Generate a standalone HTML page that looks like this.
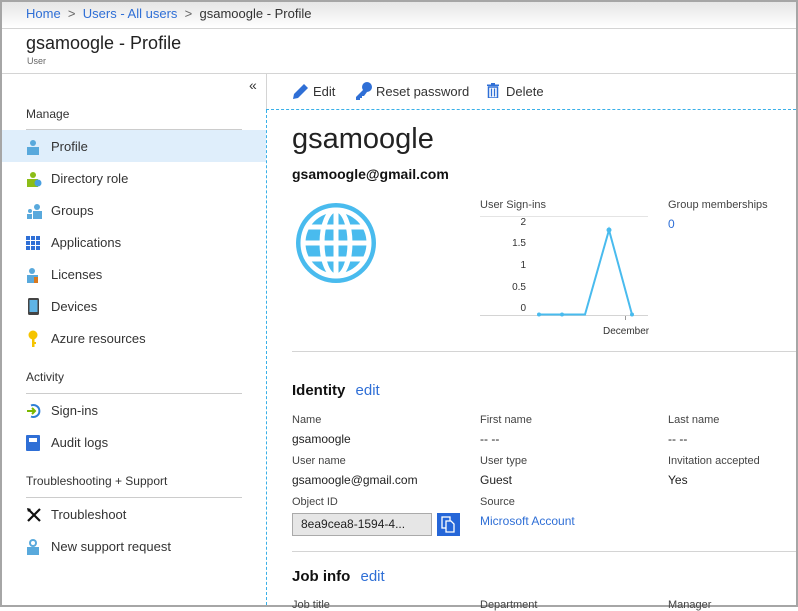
<!DOCTYPE html>
<html><head><meta charset="utf-8"><style>
*{margin:0;padding:0;box-sizing:border-box}
body{width:798px;height:607px;overflow:hidden;font-family:"Segoe UI","Liberation Sans",sans-serif;color:#222;background:#fff;position:relative;font-size:13px}
.a{position:absolute;white-space:nowrap}
.lab{font-size:11px;color:#444}
.val{font-size:12px;color:#222}
.lnk,.val.lnk{color:#2f6fd6}
.nav{font-size:13px;color:#333;left:51px}
.ic{position:absolute;left:26px}
</style></head><body>
<div class="a" style="left:0;top:0;width:798px;height:2px;background:#a6a6a6"></div>
<div class="a" style="left:0;top:0;width:2px;height:607px;background:#a6a6a6"></div>
<div class="a" style="right:0;top:0;width:2px;height:607px;background:#a6a6a6"></div>
<div class="a" style="left:0;bottom:0;width:798px;height:2px;background:#a6a6a6"></div>
<div class="a" style="left:2px;top:2px;width:794px;height:26px;background:linear-gradient(#e6e6e6,#fff)"></div>
<div class="a" style="left:2px;top:28px;width:794px;height:1px;background:#d4d4d4"></div>
<div class="a" style="left:26px;top:6px;font-size:13px"><span class="lnk">Home</span> <span style="color:#666">&nbsp;&gt;&nbsp;</span> <span class="lnk">Users - All users</span> <span style="color:#666">&nbsp;&gt;&nbsp;</span> <span style="color:#333">gsamoogle - Profile</span></div>
<div class="a" style="left:26px;top:33px;font-size:18px;color:#222">gsamoogle - Profile</div>
<div class="a" style="left:27px;top:56px;font-size:9px;color:#666">User</div>
<div class="a" style="left:2px;top:73px;width:794px;height:1px;background:#d4d4d4"></div>
<div class="a" style="left:266px;top:74px;width:1px;height:36px;background:#d4d4d4"></div>
<div class="a" style="left:266px;top:109px;width:530px;border-top:1px dashed #3ab0e8"></div>
<div class="a" style="left:266px;top:110px;height:495px;border-left:1px dashed #3ab0e8"></div>
<div class="a" style="left:249px;top:77px;font-size:14px;color:#333">«</div>
<div class="a" style="left:26px;top:107px;font-size:12px;color:#333">Manage</div>
<div class="a" style="left:26px;top:129px;width:216px;height:1px;background:#ccc"></div>
<div class="a" style="left:2px;top:130px;width:264px;height:32px;background:#dfeefb"></div>
<div class="a nav" style="top:139px">Profile</div>
<div class="a nav" style="top:171px">Directory role</div>
<div class="a nav" style="top:203px">Groups</div>
<div class="a nav" style="top:235px">Applications</div>
<div class="a nav" style="top:267px">Licenses</div>
<div class="a nav" style="top:299px">Devices</div>
<div class="a nav" style="top:331px">Azure resources</div>
<svg class="ic" style="top:139px" width="14" height="16"><circle cx="7" cy="4" r="3" fill="#59a9dc"/><rect x="1" y="8" width="12" height="8" fill="#59a9dc"/></svg>
<svg class="ic" style="top:171px" width="16" height="16"><circle cx="7" cy="4" r="3" fill="#8cbd18"/><rect x="1" y="8" width="11" height="8" fill="#8cbd18"/><circle cx="12" cy="12" r="3.5" fill="#4aa0e0"/></svg>
<svg class="ic" style="top:203px" width="16" height="16"><circle cx="11" cy="4" r="3" fill="#59a9dc"/><rect x="7" y="8" width="9" height="8" fill="#59a9dc"/><circle cx="4" cy="8" r="2" fill="#59a9dc"/><rect x="1" y="11" width="5" height="5" fill="#59a9dc"/></svg>
<svg class="ic" style="top:236px" width="14" height="14" fill="#2f6fd6"><rect x="0" y="0" width="4" height="4"/><rect x="5" y="0" width="4" height="4"/><rect x="10" y="0" width="4" height="4"/><rect x="0" y="5" width="4" height="4"/><rect x="5" y="5" width="4" height="4"/><rect x="10" y="5" width="4" height="4"/><rect x="0" y="10" width="4" height="4"/><rect x="5" y="10" width="4" height="4"/><rect x="10" y="10" width="4" height="4"/></svg>
<svg class="ic" style="top:267px" width="14" height="16"><circle cx="6" cy="4" r="3" fill="#59a9dc"/><rect x="1" y="8" width="11" height="8" fill="#59a9dc"/><rect x="8" y="10" width="4" height="6" fill="#d9781e"/></svg>
<svg class="ic" style="top:298px;left:28px" width="11" height="17"><rect x="0" y="0" width="11" height="17" rx="1.5" fill="#444"/><rect x="1.5" y="2" width="8" height="12" fill="#5fb4e6"/></svg>
<svg class="ic" style="top:330px;left:28px" width="10" height="17"><circle cx="5" cy="5" r="4.5" fill="#f5c400"/><rect x="4" y="8" width="2.5" height="9" fill="#f5c400"/><rect x="6" y="12" width="2" height="2" fill="#f5c400"/></svg>
<div class="a" style="left:26px;top:370px;font-size:12px;color:#333">Activity</div>
<div class="a" style="left:26px;top:393px;width:216px;height:1px;background:#ccc"></div>
<div class="a nav" style="top:403px">Sign-ins</div>
<div class="a nav" style="top:435px">Audit logs</div>
<svg class="ic" style="top:403px" width="16" height="16"><path d="M5 2.5A6 6 0 1 1 5 13.5" stroke="#2f7fd6" stroke-width="2" fill="none"/><path d="M1 8h8M6 5l3 3-3 3" stroke="#7ab800" stroke-width="2" fill="none"/></svg>
<svg class="ic" style="top:435px" width="14" height="16"><rect x="0" y="0" width="14" height="16" rx="1" fill="#2f6fd6"/><rect x="3" y="3" width="8" height="4" fill="#fff"/></svg>
<div class="a" style="left:26px;top:474px;font-size:12px;color:#333">Troubleshooting + Support</div>
<div class="a" style="left:26px;top:497px;width:216px;height:1px;background:#ccc"></div>
<div class="a nav" style="top:507px">Troubleshoot</div>
<div class="a nav" style="top:539px">New support request</div>
<svg class="ic" style="top:507px" width="16" height="16"><path d="M2 14L14 2M2 2l12 12" stroke="#111" stroke-width="2.2"/><path d="M1 1l4 1-3 3z" fill="#111"/></svg>
<svg class="ic" style="top:538px" width="14" height="17"><circle cx="7" cy="5" r="4" fill="#59a9dc"/><rect x="1" y="9" width="12" height="8" fill="#59a9dc"/><circle cx="7" cy="5" r="2" fill="#fff"/></svg>
<svg class="a" style="left:292px;top:83px" width="17" height="17"><path d="M1 16l1-5L12 1l4 4L6 15z" fill="#2f6fd6"/></svg>
<div class="a" style="left:313px;top:84px;font-size:13px;color:#333">Edit</div>
<svg class="a" style="left:355px;top:82px" width="17" height="18"><circle cx="12" cy="5" r="5" fill="#2f6fd6"/><path d="M9 7L1 15v3h4v-2h2v-2h2l3-4z" fill="#2f6fd6"/></svg>
<div class="a" style="left:376px;top:84px;font-size:13px;color:#333">Reset password</div>
<svg class="a" style="left:487px;top:83px" width="12" height="15"><rect x="0" y="1.5" width="12" height="1.5" fill="#2f6fd6"/><rect x="4" y="0" width="4" height="2" fill="#2f6fd6"/><path d="M1.5 4h9v11h-9z" fill="none" stroke="#2f6fd6" stroke-width="1.5"/><path d="M4.5 5.5v8M7.5 5.5v8" stroke="#2f6fd6" stroke-width="1.3"/></svg>
<div class="a" style="left:506px;top:84px;font-size:13px;color:#333">Delete</div>
<div class="a" style="left:292px;top:123px;font-size:29px;color:#222">gsamoogle</div>
<div class="a" style="left:292px;top:166px;font-size:14px;font-weight:bold;color:#111">gsamoogle@gmail.com</div>
<svg class="a" style="left:293px;top:200px" width="86" height="86" viewBox="0 0 86 86"><circle cx="43" cy="43" r="40" fill="#49bbee"/><circle cx="43" cy="43" r="33" fill="none" stroke="#fff" stroke-width="5"/><ellipse cx="43" cy="43" rx="14" ry="33" fill="none" stroke="#fff" stroke-width="5"/><path d="M43 10v66M10 43h66M14 27h58M14 59h58" stroke="#fff" stroke-width="5"/></svg>
<div class="a" style="left:480px;top:199px;font-size:11px;color:#444">User Sign-ins</div>
<div class="a" style="left:480px;top:216px;width:168px;height:1px;background:#e4e4e4"></div>
<div class="a" style="left:500px;top:218px;width:26px;text-align:right;font-size:10px;color:#333;line-height:10px">2</div>
<div class="a" style="left:500px;top:239px;width:26px;text-align:right;font-size:10px;color:#333;line-height:10px">1.5</div>
<div class="a" style="left:500px;top:261px;width:26px;text-align:right;font-size:10px;color:#333;line-height:10px">1</div>
<div class="a" style="left:500px;top:283px;width:26px;text-align:right;font-size:10px;color:#333;line-height:10px">0.5</div>
<div class="a" style="left:500px;top:304px;width:26px;text-align:right;font-size:10px;color:#333;line-height:10px">0</div>
<div class="a" style="left:480px;top:315px;width:168px;height:1px;background:#d4d4d4"></div>
<div class="a" style="left:625px;top:316px;width:1px;height:4px;background:#999"></div>
<svg class="a" style="left:480px;top:190px" width="170" height="130"><polyline points="59,124.5 82,124.5 105,124.5 129,40 152,124.5" fill="none" stroke="#49bbee" stroke-width="2"/><circle cx="59" cy="124.5" r="2" fill="#49bbee"/><circle cx="82" cy="124.5" r="2" fill="#49bbee"/><circle cx="129" cy="40" r="2.5" fill="#49bbee"/><circle cx="152" cy="124.5" r="2" fill="#49bbee"/></svg>
<div class="a" style="left:603px;top:326px;font-size:10px;color:#333">December</div>
<div class="a" style="left:668px;top:199px;font-size:11px;color:#444">Group memberships</div>
<div class="a lnk" style="left:668px;top:217px;font-size:12px">0</div>
<div class="a" style="left:292px;top:351px;width:504px;height:1px;background:#d4d4d4"></div>
<div class="a" style="left:292px;top:382px;font-size:15px;font-weight:bold;color:#111">Identity <span class="lnk" style="font-weight:normal;margin-left:6px">edit</span></div>
<div class="a lab" style="left:292px;top:414px">Name</div>
<div class="a val" style="left:292px;top:432px">gsamoogle</div>
<div class="a lab" style="left:292px;top:455px">User name</div>
<div class="a val" style="left:292px;top:473px">gsamoogle@gmail.com</div>
<div class="a lab" style="left:292px;top:496px">Object ID</div>
<div class="a" style="left:292px;top:513px;width:140px;height:23px;background:#e6e6e6;border:1px solid #aaa;font-size:12px;padding:3px 0 0 8px;color:#222">8ea9cea8-1594-4...</div>
<div class="a" style="left:437px;top:513px;width:23px;height:23px;background:#2566d8"></div>
<svg class="a" style="left:441px;top:516px" width="15" height="17"><rect x="1" y="1" width="8" height="11" fill="none" stroke="#fff" stroke-width="1.3"/><path d="M5 5h5l3 3v8H5z" fill="#2566d8" stroke="#fff" stroke-width="1.3"/></svg>
<div class="a lab" style="left:480px;top:414px">First name</div>
<div class="a val" style="left:480px;top:432px">-- --</div>
<div class="a lab" style="left:480px;top:455px">User type</div>
<div class="a val" style="left:480px;top:473px">Guest</div>
<div class="a lab" style="left:480px;top:496px">Source</div>
<div class="a val lnk" style="left:480px;top:514px">Microsoft Account</div>
<div class="a lab" style="left:668px;top:414px">Last name</div>
<div class="a val" style="left:668px;top:432px">-- --</div>
<div class="a lab" style="left:668px;top:455px">Invitation accepted</div>
<div class="a val" style="left:668px;top:473px">Yes</div>
<div class="a" style="left:292px;top:551px;width:504px;height:1px;background:#d4d4d4"></div>
<div class="a" style="left:292px;top:568px;font-size:15px;font-weight:bold;color:#111">Job info <span class="lnk" style="font-weight:normal;margin-left:6px">edit</span></div>
<div class="a lab" style="left:292px;top:599px">Job title</div>
<div class="a lab" style="left:480px;top:599px">Department</div>
<div class="a lab" style="left:668px;top:599px">Manager</div>
</body></html>
